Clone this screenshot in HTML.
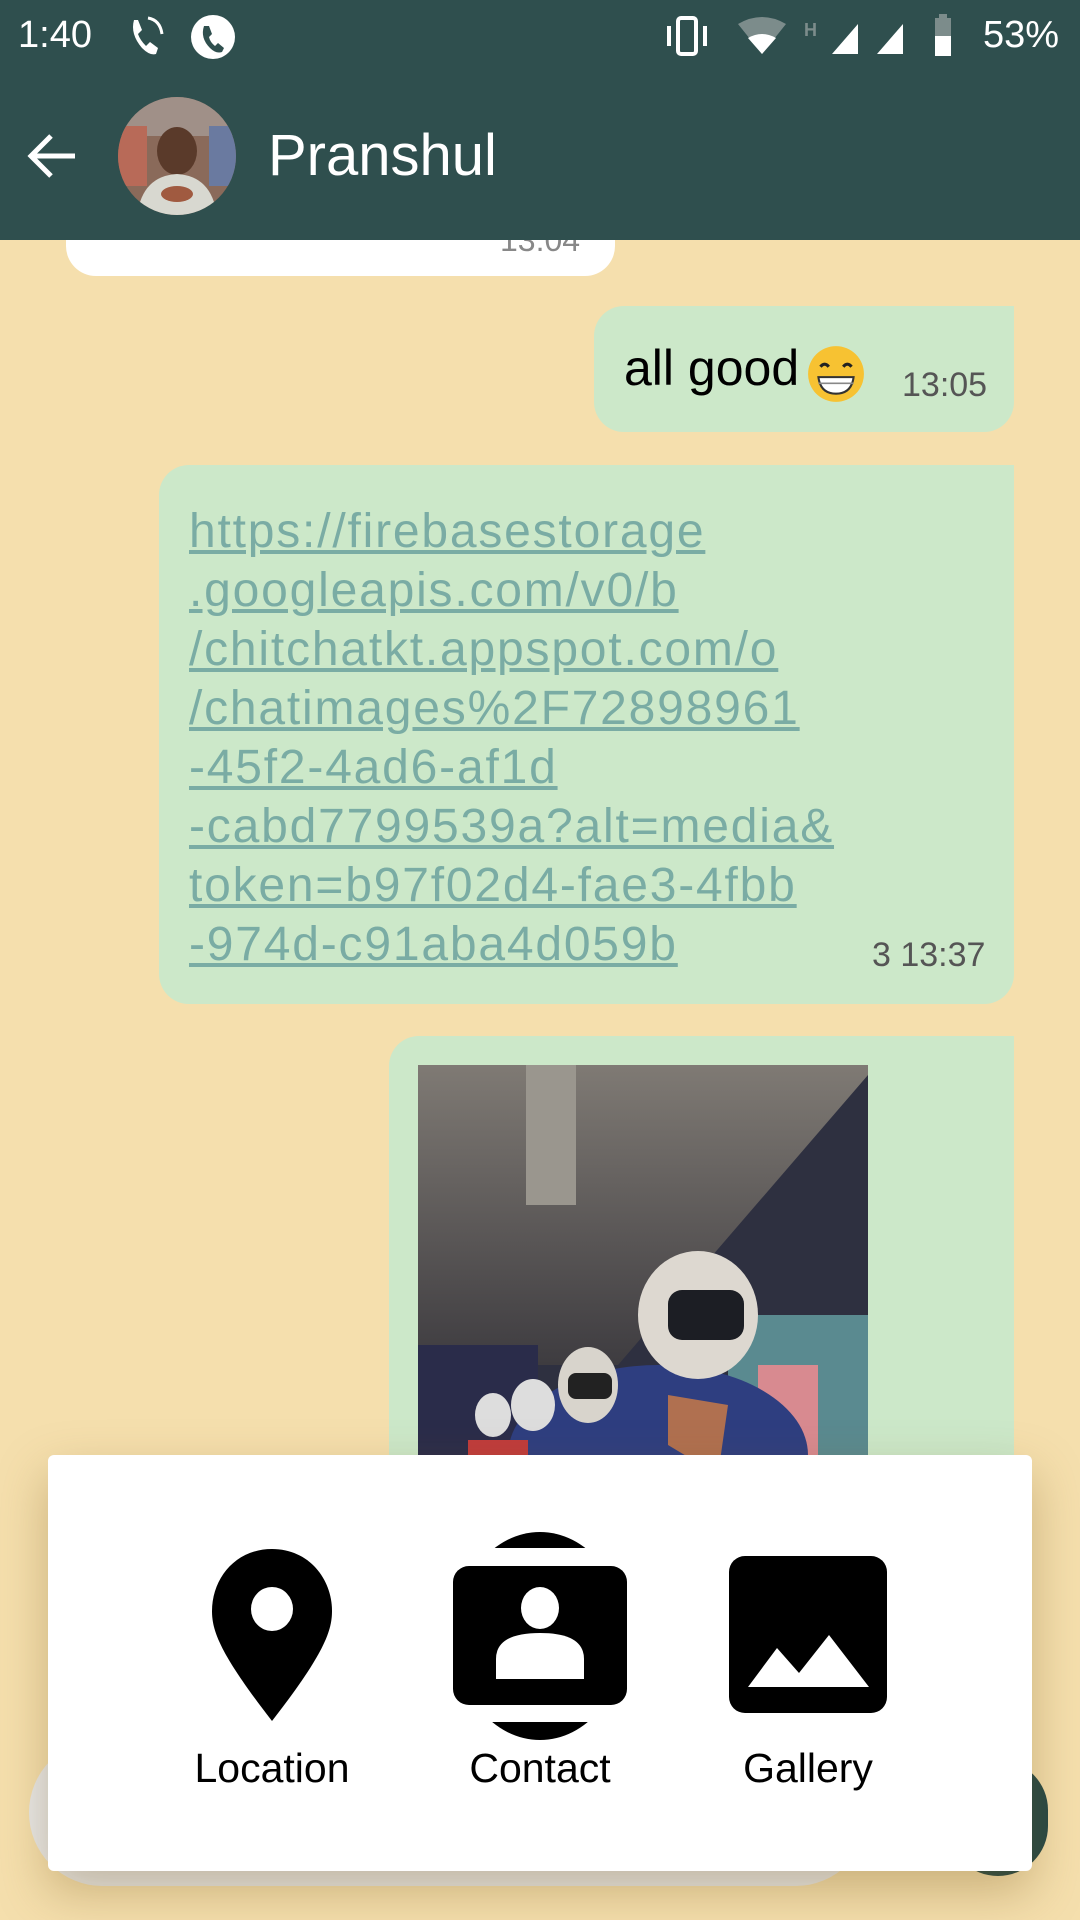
<!DOCTYPE html>
<html><head><meta charset="utf-8"><style>
*{margin:0;padding:0;box-sizing:border-box}
body{width:1080px;height:1920px;overflow:hidden;background:#f5dfad;font-family:"Liberation Sans",sans-serif;position:relative}
.abs{position:absolute}
.bar{left:0;top:0;width:1080px;height:240px;background:#2f4f4e}
.bub{position:absolute;background:#cce8c9}
.link{position:absolute;left:189px;top:502px;font-size:48px;line-height:59px;color:#7aaca4;text-decoration:underline;letter-spacing:1.8px;white-space:pre}
</style></head><body>
<div class="abs" style="left:66px;top:200px;width:549px;height:76px;background:#fff;border-radius:0 0 30px 30px"></div>
<div class="abs" style="left:500px;top:222px;font-size:32px;color:#888">13:04</div>

<div class="bar abs"></div>
<div class="abs" style="left:18px;top:14px;font-size:38px;color:#fff">1:40</div>
<svg class="abs" style="left:128px;top:12px" width="112" height="50" viewBox="0 0 112 50">
<path d="M6 8 q-4 14 8 28 q8 8 14 6 l2-6 l-8-6 l-4 4 q-6-6 -8-12 l4-4 l-4-10z" fill="#fff"/>
<path d="M20 6 q12 2 14 16" stroke="#fff" stroke-width="3" fill="none"/>
<circle cx="85" cy="25" r="22" fill="#fff"/>
<path d="M76 14 q-4 12 6 22 q6 6 12 4 l2-4 l-6-5 l-3 3 q-5-4 -6-9 l3-3 l-3-8z" fill="#2f4f4e"/>
</svg>
<svg class="abs" style="left:664px;top:14px" width="255" height="46" viewBox="0 0 255 46">
<rect x="14" y="4" width="18" height="36" rx="3" fill="none" stroke="#fff" stroke-width="4"/>
<rect x="3" y="12" width="4" height="20" fill="#fff"/><rect x="39" y="12" width="4" height="20" fill="#fff"/>
<path d="M74 10 q24-14 48 0 l-24 30z" fill="#7c8c8b"/><path d="M84 24 q14-8 28 0 l-14 16z" fill="#fff"/>
<text x="140" y="22" font-size="18" fill="#7c8c8b" font-weight="bold">H</text>
<path d="M168 40 l26-30 v30z" fill="#fff"/><path d="M213 40 l26-30 v30z" fill="#fff"/>
</svg>
<svg class="abs" style="left:935px;top:14px" width="20" height="44"><rect x="4" y="0" width="8" height="4" fill="#7c8c8b"/><rect x="0" y="4" width="16" height="18" fill="#7c8c8b"/><rect x="0" y="22" width="16" height="20" fill="#fff"/></svg>
<div class="abs" style="left:983px;top:14px;font-size:38px;color:#fff">53%</div>

<svg class="abs" style="left:27px;top:133px" width="50" height="46" viewBox="0 0 50 46"><path d="M24 3 L4 23 L24 43 M4 23 H48" stroke="#fff" stroke-width="5" fill="none"/></svg>
<svg class="abs" style="left:117px;top:96px" width="120" height="120" viewBox="0 0 120 120">
<defs><clipPath id="c"><circle cx="60" cy="60" r="59"/></clipPath></defs>
<g clip-path="url(#c)"><rect width="120" height="120" fill="#8a6a5a"/><rect y="0" width="120" height="40" fill="#a09088"/>
<rect x="0" y="30" width="30" height="60" fill="#b86a58"/><rect x="92" y="30" width="28" height="60" fill="#6a7aa0"/>
<ellipse cx="60" cy="55" rx="20" ry="24" fill="#5a3a2a"/><path d="M20 120 q5-40 40-42 q35 2 40 42z" fill="#d8d8d0"/>
<ellipse cx="60" cy="98" rx="16" ry="8" fill="#a05a40"/></g></svg>
<div class="abs" style="left:268px;top:122px;font-size:58px;font-weight:500;color:#fff">Pranshul</div>

<div class="bub" style="left:594px;top:306px;width:420px;height:126px;border-radius:30px 0 30px 30px"></div>
<div class="abs" style="left:624px;top:339px;font-size:50px;color:#000">all good</div>
<svg class="abs" style="left:806px;top:344px" width="60" height="60" viewBox="0 0 58 58"><circle cx="29" cy="29" r="27" fill="#f7c232"/><path d="M14 22 q4-5 8 0 M36 22 q4-5 8 0" stroke="#222" stroke-width="3" fill="none"/><path d="M12 32 h34 q-2 16 -17 16 q-15 0 -17-16z" fill="#fff" stroke="#333" stroke-width="2"/><path d="M12 38 h34" stroke="#888" stroke-width="1.5"/></svg>
<div class="abs" style="left:902px;top:366px;font-size:34px;color:#555">13:05</div>

<div class="bub" style="left:159px;top:465px;width:855px;height:539px;border-radius:30px 0 30px 30px"></div>
<div class="link">https://firebasestorage
.googleapis.com/v0/b
/chitchatkt.appspot.com/o
/chatimages%2F72898961
-45f2-4ad6-af1d
-cabd7799539a?alt=media&amp;
token=b97f02d4-fae3-4fbb
-974d-c91aba4d059b</div>
<div class="abs" style="left:872px;top:936px;font-size:34px;color:#555">3 13:37</div>

<div class="bub" style="left:389px;top:1036px;width:625px;height:500px;border-radius:30px 0 0 0"></div>
<svg class="abs" style="left:418px;top:1065px" width="450" height="420" viewBox="0 0 450 420">
<defs><linearGradient id="g" x1="0" y1="0" x2="0" y2="1"><stop offset="0" stop-color="#7f7a74"/><stop offset="1" stop-color="#3e3c40"/></linearGradient></defs>
<rect width="450" height="420" fill="#2e3040"/>
<path d="M0 0 H450 V10 L200 300 H0z" fill="url(#g)"/>
<rect x="108" y="0" width="50" height="140" fill="#9a968e"/>
<rect x="0" y="280" width="120" height="140" fill="#2a2c4a"/>
<rect x="310" y="250" width="140" height="170" fill="#5a8a90"/>
<rect x="340" y="300" width="60" height="120" fill="#d88a90"/>
<ellipse cx="240" cy="390" rx="150" ry="90" fill="#2e3e80"/>
<ellipse cx="280" cy="250" rx="60" ry="64" fill="#ddd8d0"/><rect x="250" y="225" width="76" height="50" rx="14" fill="#1c1e24"/>
<path d="M250 330 l60 10 l-10 70 l-50 -30z" fill="#b07050"/>
<ellipse cx="170" cy="320" rx="30" ry="38" fill="#d8d4cc"/><rect x="150" y="308" width="44" height="26" rx="8" fill="#222"/>
<ellipse cx="115" cy="340" rx="22" ry="26" fill="#ddd"/><ellipse cx="75" cy="350" rx="18" ry="22" fill="#ddd"/>
<rect x="50" y="375" width="60" height="45" fill="#c03c3c"/>
</svg>

<div class="abs" style="left:29px;top:1739px;width:840px;height:147px;border-radius:74px;background:#e8e8e8"></div>
<div class="abs" style="left:948px;top:1760px;width:100px;height:116px;border-radius:50px;background:#254846"></div>

<div class="abs" style="left:48px;top:1455px;width:984px;height:416px;background:#fff;border-radius:6px;box-shadow:0 20px 50px rgba(120,90,30,0.35)"></div>
<svg class="abs" style="left:210px;top:1549px" width="124" height="174" viewBox="0 0 124 174">
<path d="M62 0 C25 0 2 30 2 62 C2 82 10 105 62 172 C114 105 122 82 122 62 C122 30 99 0 62 0Z" fill="#000"/>
<ellipse cx="62" cy="60" rx="21" ry="22" fill="#fff"/></svg>
<svg class="abs" style="left:453px;top:1531px" width="176" height="210" viewBox="0 0 176 210">
<ellipse cx="87" cy="105" rx="85" ry="104" fill="#000"/>
<rect x="0" y="17" width="176" height="18" fill="#fff"/><rect x="0" y="174" width="176" height="17" fill="#fff"/>
<rect x="0" y="35" width="174" height="139" rx="16" fill="#000"/>
<ellipse cx="87" cy="77" rx="19" ry="21" fill="#fff"/>
<path d="M43 148 V128 Q43 102 87 102 Q131 102 131 128 V148Z" fill="#fff"/></svg>
<svg class="abs" style="left:729px;top:1556px" width="158" height="158" viewBox="0 0 158 158">
<rect x="0" y="0" width="158" height="157" rx="16" fill="#000"/>
<path d="M19 131 L48 92 L70 117 L100 79 L140 131Z" fill="#fff"/></svg>
<div class="abs" style="left:172px;top:1745px;width:200px;text-align:center;font-size:41px;color:#000">Location</div>
<div class="abs" style="left:440px;top:1745px;width:200px;text-align:center;font-size:41px;color:#000">Contact</div>
<div class="abs" style="left:708px;top:1745px;width:200px;text-align:center;font-size:41px;color:#000">Gallery</div>
</body></html>
